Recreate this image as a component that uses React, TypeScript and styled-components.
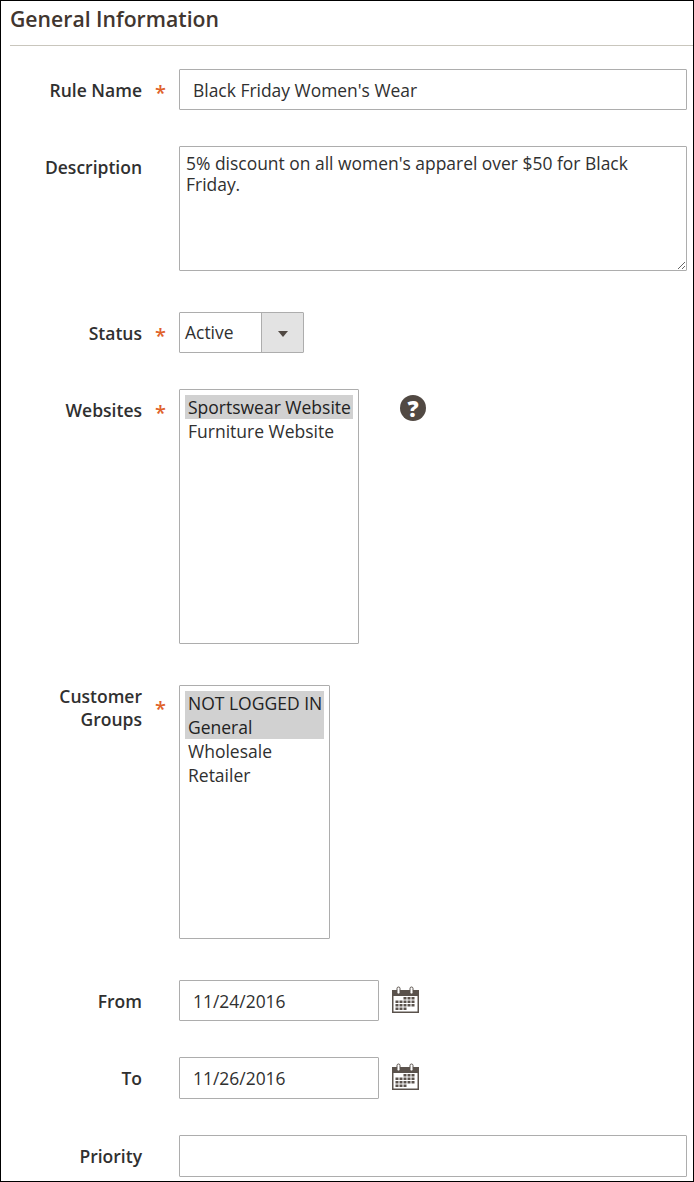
import React from "react";
import styled, { createGlobalStyle } from "styled-components";

const Global = createGlobalStyle`
  html, body { margin: 0; padding: 0; background: #fff; }
  * { box-sizing: border-box; }
`;

const Page = styled.div`
  width: 694px;
  height: 1182px;
  border: 1px solid #000;
  overflow: hidden;
  background: #fff;
  font-family: "Open Sans", "Liberation Sans", sans-serif;
  color: #303030;
  padding-left: 9px;
`;

const Title = styled.h2`
  margin: 0;
  height: 45px;
  padding-top: 4px;
  border-bottom: 1px solid #c9c6bd;
  font-size: 21.2px;
  line-height: 28px;
  font-weight: 600;
  color: #41362f;
`;

const Row = styled.div<{ $top: number }>`
  display: flex;
  align-items: flex-start;
  margin-top: ${(p) => p.$top}px;
`;

const LabelCell = styled.div<{ $offset: number }>`
  width: 132px;
  padding-top: ${(p) => p.$offset}px;
  text-align: right;
  font-size: 17.5px;
  line-height: 23px;
  font-weight: 600;
  color: #303030;
`;

const Star = styled.div<{ $offset: number }>`
  width: 37px;
  height: 20px;
  padding-top: ${(p) => p.$offset}px;
  padding-left: 13px;
  font-size: 20px;
  line-height: 22px;
  font-weight: 600;
  color: #e0622a;
`;

const TextInput = styled.input<{ $w: number; $h: number }>`
  display: block;
  width: ${(p) => p.$w}px;
  height: ${(p) => p.$h}px;
  padding: 0 13px;
  border: 1px solid #adadad;
  border-radius: 1px;
  background: #fff;
  font: 400 17.45px "Open Sans", sans-serif;
  color: #303030;
  outline: none;
`;

const TextArea = styled.textarea`
  display: block;
  width: 508px;
  height: 125px;
  padding: 6px 6px;
  border: 1px solid #adadad;
  border-radius: 1px;
  background: #fff;
  font: 400 17.45px/20.5px "Open Sans", sans-serif;
  color: #303030;
  outline: none;
  resize: both;
`;

const Dropdown = styled.div`
  display: flex;
  width: 125px;
  height: 41px;
  border: 1px solid #adadad;
  border-radius: 1px;
  font-size: 17.45px;
  line-height: 39px;
`;

const DropdownValue = styled.div`
  width: 82px;
  padding-left: 5px;
  border-right: 1px solid #adadad;
`;

const DropdownButton = styled.div`
  flex: 1;
  display: flex;
  align-items: center;
  justify-content: center;
  background: #e3e3e3;
`;

const Caret = styled.span`
  width: 0;
  height: 0;
  margin-top: 2px;
  border-left: 5px solid transparent;
  border-right: 5px solid transparent;
  border-top: 6px solid #514943;
`;

const ListBox = styled.div<{ $w: number; $h: number }>`
  width: ${(p) => p.$w}px;
  height: ${(p) => p.$h}px;
  padding: 5px 5px;
  border: 1px solid #adadad;
  border-radius: 1px;
  font-size: 17.5px;
  line-height: 24px;
`;

const Option = styled.div<{ $selected?: boolean }>`
  height: 24px;
  padding-left: 3px;
  white-space: nowrap;
  background: ${(p) => (p.$selected ? "#d1d1d1" : "transparent")};
  color: ${(p) => (p.$selected ? "#222" : "#303030")};
`;

const HelpIcon = styled.span`
  display: flex;
  align-items: center;
  justify-content: center;
  width: 26px;
  height: 26px;
  margin: 6px 0 0 41px;
  border-radius: 50%;
  background: #514943;
  color: #fff;
  font-size: 22px;
  font-weight: 800;
  line-height: 26px;
`;

const CalendarButton = styled.span`
  display: block;
  width: 28px;
  height: 28px;
  margin: 6px 0 0 12px;
`;

const Calendar = () => (
  <CalendarButton>
    <svg width="28" height="28" viewBox="0 0 28 28">
      <rect x="1" y="4" width="27" height="23" fill="#5a524c" />
      <rect x="2.5" y="10" width="24" height="15.5" fill="#fff" />
      <rect x="6" y="1" width="3" height="7" rx="1.5" fill="#fff" stroke="#5a524c" strokeWidth="1" />
      <rect x="19" y="1" width="3" height="7" rx="1.5" fill="#fff" stroke="#5a524c" strokeWidth="1" />
      {[11, 14.5, 18, 21.5].map((y, r) =>
        [4.5, 8.5, 12.5, 16.5, 20.5].map((x, c) =>
          (r === 0 && c < 2) || (r === 3 && c > 2) ? null : (
            <rect key={`${r}-${c}`} x={x} y={y} width="3" height="2.5" fill="#5a524c" />
          )
        )
      )}
    </svg>
  </CalendarButton>
);

export default function App() {
  return (
    <Page>
      <Global />
      <Title>General Information</Title>
      <Row $top={23}>
        <LabelCell $offset={10}>Rule Name</LabelCell>
        <Star $offset={13}>*</Star>
        <TextInput $w={508} $h={41} defaultValue="Black Friday Women's Wear" />
      </Row>
      <Row $top={36}>
        <LabelCell $offset={10}>Description</LabelCell>
        <Star $offset={0} />
        <TextArea defaultValue="5% discount on all women's apparel over $50 for Black Friday." />
      </Row>
      <Row $top={41}>
        <LabelCell $offset={10}>Status</LabelCell>
        <Star $offset={13}>*</Star>
        <Dropdown>
          <DropdownValue>Active</DropdownValue>
          <DropdownButton>
            <Caret />
          </DropdownButton>
        </Dropdown>
      </Row>
      <Row $top={36}>
        <LabelCell $offset={10}>Websites</LabelCell>
        <Star $offset={13}>*</Star>
        <ListBox $w={180} $h={255}>
          <Option $selected>Sportswear Website</Option>
          <Option>Furniture Website</Option>
        </ListBox>
        <HelpIcon>?</HelpIcon>
      </Row>
      <Row $top={41}>
        <LabelCell $offset={0}>
          Customer
          <br />
          Groups
        </LabelCell>
        <Star $offset={13}>*</Star>
        <ListBox $w={151} $h={254}>
          <Option $selected>NOT LOGGED IN</Option>
          <Option $selected>General</Option>
          <Option>Wholesale</Option>
          <Option>Retailer</Option>
        </ListBox>
      </Row>
      <Row $top={41}>
        <LabelCell $offset={10}>From</LabelCell>
        <Star $offset={0} />
        <TextInput $w={200} $h={41} defaultValue="11/24/2016" />
        <Calendar />
      </Row>
      <Row $top={36}>
        <LabelCell $offset={10}>To</LabelCell>
        <Star $offset={0} />
        <TextInput $w={200} $h={42} defaultValue="11/26/2016" />
        <Calendar />
      </Row>
      <Row $top={36}>
        <LabelCell $offset={10}>Priority</LabelCell>
        <Star $offset={0} />
        <TextInput $w={508} $h={42} />
      </Row>
    </Page>
  );
}
